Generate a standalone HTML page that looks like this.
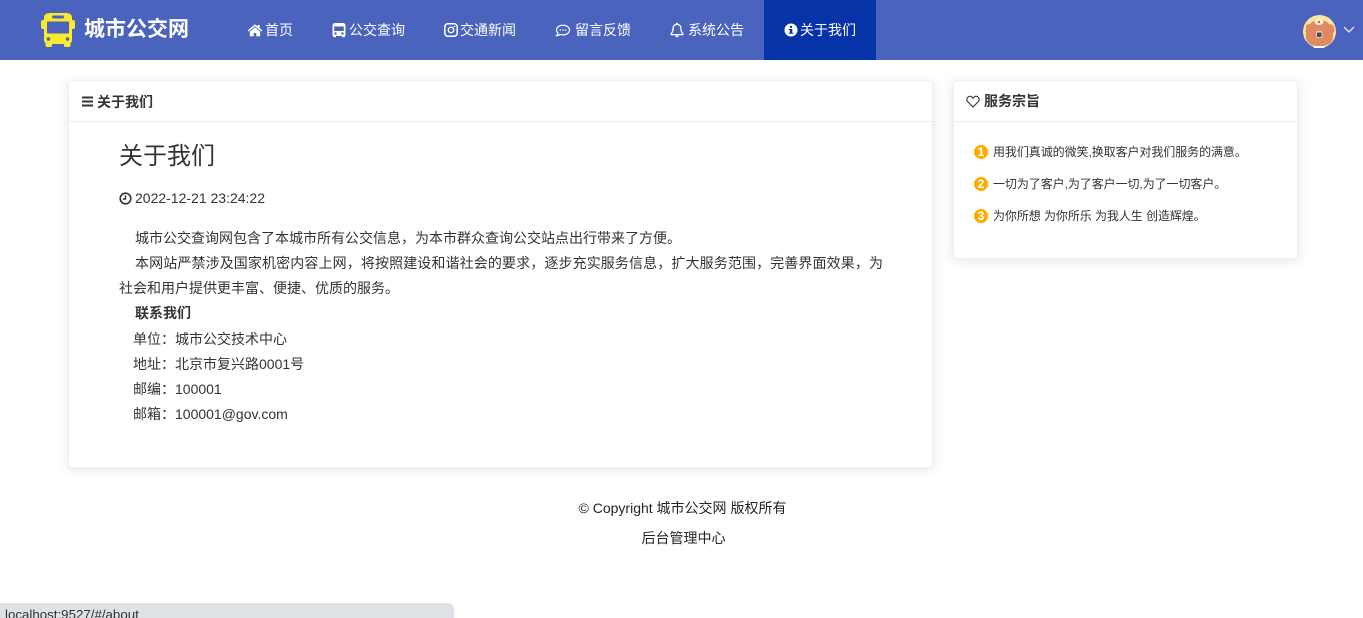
<!DOCTYPE html>
<html lang="zh">
<head>
<meta charset="utf-8">
<title>城市公交网</title>
<style>
*{box-sizing:border-box}
html,body{margin:0;padding:0;width:1363px;height:618px;overflow:hidden;background:#fff;font-family:"Liberation Sans","Noto Sans CJK SC",sans-serif;color:#333}
.a{position:absolute;white-space:nowrap}
#nav{position:absolute;left:0;top:0;width:1363px;height:60px;background:#4a63bd}
#active{position:absolute;left:764px;top:0;width:112px;height:60px;background:#0633a8}
.n{position:absolute;top:20px;height:20px;line-height:20px;font-size:14px;color:#fff;white-space:nowrap}
.ni{position:absolute;top:22px;width:16px;height:16px}
.card{position:absolute;background:#fff;border:1px solid #edf0f6;border-radius:4px;box-shadow:0 2px 12px rgba(40,50,90,.12)}
.hr{position:absolute;height:1px;background:#e9edf4}
.t{position:absolute;white-space:nowrap;font-size:14px;line-height:25px;height:25px;color:#333}
.s{position:absolute;white-space:nowrap;font-size:12px;line-height:18px;height:18px;color:#333;letter-spacing:-.07px}
.b{position:absolute;left:974px;width:14px;height:14px;border-radius:50%;background:#ffab00;color:#fff;font-size:12px;font-weight:bold;line-height:14px;text-align:center}
</style>
</head>
<body>
<div id="nav"></div>
<div id="active"></div>

<svg class="a" style="left:40px;top:12px" width="36" height="36" viewBox="0 0 36 36">
<path fill="#fbe92b" d="M4 6Q4 1 10 1H26Q32 1 32 6V28Q32 30 30.500 31V33.500Q30.500 35 29 35H25.500Q24 35 24 33.500V32H12V33.500Q12 35 10.500 35H7Q5.500 35 5.500 33.500V31Q4 30 4 28Z"/>
<rect x="1" y="8" width="4" height="9" rx="1.800" fill="#fbe92b"/>
<rect x="31" y="8" width="4" height="9" rx="1.800" fill="#fbe92b"/>
<rect x="7" y="9.500" width="22" height="12" rx="1" fill="#4a63bd"/>
<rect x="12" y="3.500" width="12" height="3" rx="1.200" fill="#4a63bd"/>
<circle cx="8.500" cy="27" r="1.800" fill="#4a63bd"/>
<circle cx="27.500" cy="27" r="1.800" fill="#4a63bd"/>
</svg>
<div class="a" style="left:84px;top:15px;height:30px;line-height:30px;font-size:21px;font-weight:bold;color:#fff">城市公交网</div>

<svg class="ni" style="left:247px" viewBox="0 0 16 16"><path fill="#fff" d="M8 2.300L.6 8.500l.9 1L8 4.300l6.500 5.200.9-1-2.700-2.200V3h-2.200v1.500zM2.800 9.500V14.200h3.900v-3.200h2.600v3.200h3.900V9.500L8 5.300z"/></svg>
<div class="n" style="left:265px">首页</div>

<svg class="ni" style="left:331px" viewBox="0 0 16 16"><path fill="#fff" fill-rule="evenodd" d="M1.500 3.500Q1.500 1 4.500 1H11.500Q14.500 1 14.500 3.500V13Q14.500 13.800 13.800 14V15.300H11V14H5V15.300H2.200V14Q1.500 13.800 1.500 13ZM3.200 4.500V9H12.800V4.500ZM4.500 10.300a1.200 1.200 0 1 0 .01 0ZM11.500 10.300a1.200 1.200 0 1 0 .01 0Z"/></svg>
<div class="n" style="left:349px">公交查询</div>

<svg class="ni" style="left:443px" viewBox="0 0 16 16"><rect x="1.800" y="1.800" width="12.400" height="12.400" rx="3" fill="none" stroke="#fff" stroke-width="1.500"/><circle cx="8" cy="8" r="2.700" fill="none" stroke="#fff" stroke-width="1.400"/><circle cx="11.400" cy="4.600" r=".8" fill="#fff"/></svg>
<div class="n" style="left:460px">交通新闻</div>

<svg class="ni" style="left:555px" viewBox="0 0 16 16"><path fill="none" stroke="#fff" stroke-width="1.200" d="M8 3.200C4.300 3.200 1.500 5.300 1.500 8c0 1.200.6 2.300 1.500 3.100-.1 1-.7 2-1.300 2.500 1.400 0 2.600-.5 3.400-1.200.9.300 1.900.5 2.900.5 3.700 0 6.500-2.200 6.500-4.900S11.700 3.200 8 3.200z"/><circle cx="5.300" cy="8" r=".8" fill="#fff"/><circle cx="8" cy="8" r=".8" fill="#fff"/><circle cx="10.700" cy="8" r=".8" fill="#fff"/></svg>
<div class="n" style="left:575px">留言反馈</div>

<svg class="ni" style="left:669px" viewBox="0 0 16 16"><path fill="none" stroke="#fff" stroke-width="1.300" d="M8 2.300c-2.400 0-3.900 1.800-3.900 4 0 3.800-1.700 5-2 5.700v.6h11.800V12c-.3-.7-2-1.900-2-5.700 0-2.200-1.500-4-3.900-4z"/><path fill="#fff" d="M8 .7a1.100 1.100 0 0 1 1.100 1.100v.8H6.900v-.8A1.100 1.100 0 0 1 8 .7zM6.200 13.500h3.600A1.800 1.800 0 0 1 8 15.200a1.800 1.800 0 0 1-1.800-1.700z"/></svg>
<div class="n" style="left:688px">系统公告</div>

<svg class="ni" style="left:783px" viewBox="0 0 16 16"><circle cx="8" cy="8" r="6.500" fill="#fff"/><rect x="6.800" y="7" width="2.500" height="4.600" fill="#0633a8"/><rect x="5.700" y="7" width="2" height="1" fill="#0633a8"/><rect x="5.700" y="10.700" width="4.600" height="1" fill="#0633a8"/><circle cx="7.900" cy="4.900" r="1.200" fill="#0633a8"/></svg>
<div class="n" style="left:800px">关于我们</div>

<svg class="a" style="left:1303px;top:15px" width="34" height="33" viewBox="0 0 34 33">
<circle cx="16.500" cy="16.500" r="16.500" fill="#ffe4a0"/>
<path fill="#de8a63" d="M3 14Q2 9 7 9Q10 5 16.500 5Q23 5 26 9Q31 9 31.500 14Q32 17 30 18Q31 26 26 29Q21 31.500 16.500 31.500Q11 31.500 7 29Q2 26 3 18Q2 16 3 14Z"/>
<ellipse cx="16" cy="7" rx="4.500" ry="3" fill="#fff2dc"/>
<circle cx="16" cy="7" r="1.200" fill="#d25a5a"/>
<ellipse cx="10.500" cy="19" rx="2.200" ry="1.700" fill="#ee7d6c"/>
<ellipse cx="22" cy="19" rx="2.200" ry="1.700" fill="#ee7d6c"/>
<rect x="13" y="16" width="6.500" height="7" rx="2" fill="#f6c9a8"/>
<rect x="14" y="17.500" width="4.500" height="4.500" rx="1" fill="#3d4f58"/>
<rect x="10.500" y="31" width="11" height="2" rx="1" fill="#fff"/>
</svg>
<svg class="a" style="left:1343px;top:26px" width="12" height="8" viewBox="0 0 12 8"><path d="M1 1L6 6L11 1" fill="none" stroke="#e6eaf6" stroke-width="1.300"/></svg>

<div class="card" style="left:68px;top:80px;width:865px;height:388px"></div>
<div class="hr" style="left:69px;top:121px;width:863px"></div>
<svg class="a" style="left:81px;top:95px" width="13" height="13" viewBox="0 0 13 13"><path fill="#333" d="M1 1.500h11v2H1zM1 5.500h11v2H1zM1 9.500h11v2H1z"/></svg>
<div class="a" style="left:97px;top:92px;height:20px;line-height:20px;font-size:14px;font-weight:bold;color:#333;letter-spacing:0">关于我们</div>

<div class="a" style="left:119px;top:141px;height:32px;line-height:32px;font-size:24px;color:#333">关于我们</div>
<svg class="a" style="left:119px;top:192px" width="13" height="13" viewBox="0 0 13 13"><circle cx="6.500" cy="6.500" r="5.300" fill="none" stroke="#333" stroke-width="1.600"/><path d="M6.500 3.200V7H3.800" fill="none" stroke="#333" stroke-width="1.400"/></svg>
<div class="a" style="left:135px;top:189px;height:18px;line-height:18px;font-size:14px;color:#333">2022-12-21 23:24:22</div>

<div class="t" style="left:135px;top:226px">城市公交查询网包含了本城市所有公交信息，为本市群众查询公交站点出行带来了方便。</div>
<div class="t" style="left:135px;top:251px;width:748px;text-align:justify;text-align-last:justify">本网站严禁涉及国家机密内容上网，将按照建设和谐社会的要求，逐步充实服务信息，扩大服务范围，完善界面效果，为</div>
<div class="t" style="left:119px;top:276px">社会和用户提供更丰富、便捷、优质的服务。</div>
<div class="t" style="left:135px;top:301px;font-weight:bold">联系我们</div>
<div class="t" style="left:133px;top:327px">单位：城市公交技术中心</div>
<div class="t" style="left:133px;top:352px">地址：北京市复兴路0001号</div>
<div class="t" style="left:133px;top:377px">邮编：100001</div>
<div class="t" style="left:133px;top:402px">邮箱：100001@gov.com</div>

<div class="card" style="left:953px;top:80px;width:345px;height:179px"></div>
<div class="hr" style="left:954px;top:121px;width:343px"></div>
<svg class="a" style="left:966px;top:95px" width="14" height="13" viewBox="0 0 14 13"><path fill="none" stroke="#333" stroke-width="1.100" d="M7 12L1.800 6.800C-.8 3.900 2.800-.1 5.500 1.700 6.200 2.200 6.700 2.700 7 3.300 7.300 2.700 7.800 2.200 8.500 1.700 11.200-.1 14.800 3.900 12.200 6.800z"/></svg>
<div class="a" style="left:984px;top:92px;height:18px;line-height:18px;font-size:14px;font-weight:bold;color:#333">服务宗旨</div>

<div class="b" style="top:145px">1</div>
<div class="s" style="left:993px;top:143px">用我们真诚的微笑,换取客户对我们服务的满意。</div>
<div class="b" style="top:177px">2</div>
<div class="s" style="left:993px;top:175px">一切为了客户,为了客户一切,为了一切客户。</div>
<div class="b" style="top:209px">3</div>
<div class="s" style="left:993px;top:207px">为你所想 为你所乐 为我人生 创造辉煌。</div>

<div class="a" style="left:0;top:498px;width:1365px;height:20px;line-height:20px;text-align:center;font-size:14px;color:#212529">© Copyright 城市公交网 版权所有</div>
<div class="a" style="left:1px;top:528px;width:1365px;height:20px;line-height:20px;text-align:center;font-size:14px;color:#212529">后台管理中心</div>

<div class="a" style="left:0;top:603px;width:454px;height:15px;background:#dee1e6;border-top-right-radius:6px;overflow:hidden"><div style="position:absolute;left:5px;top:4px;height:16px;line-height:16px;font-size:13.300px;color:#333">localhost:9527/#/about</div></div>
</body>
</html>
